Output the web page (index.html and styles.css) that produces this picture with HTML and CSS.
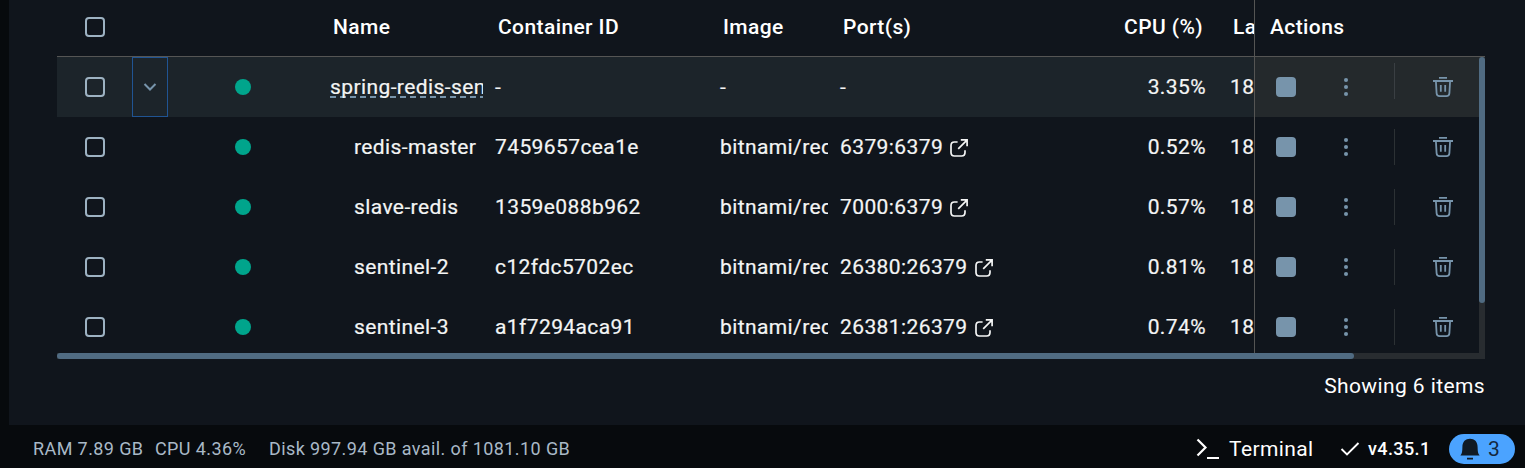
FILE: index.html
```html
<!DOCTYPE html>
<html lang="en">
<head>
<meta charset="utf-8">
<title>Containers</title>
<link rel="stylesheet" href="styles.css">
</head>
<body>
<svg class="defs" aria-hidden="true">
  <symbol id="open" viewBox="0 0 20 20"><path d="M8.6 4H5.400Q2 4 2 7.400v7.200Q2 18 5.400 18h7.200Q16 18 16 14.600V12.200M11.800 1.900h6.300v6.300M17.700 2.300 9.200 10.800" fill="none" stroke="currentColor" stroke-width="1.700"/></symbol>
  <symbol id="trash" viewBox="0 0 20 20"><path d="M6 .9h8M0 4h20M2.900 4l.7 12.200Q3.800 19.100 6.600 19.100h6.800Q16.200 19.100 16.400 16.200L17.100 4M7.800 8v6.800M12.200 8v6.800" fill="none" stroke="currentColor" stroke-width="1.800"/></symbol>
  <symbol id="dots" viewBox="0 0 6 20"><circle cx="3" cy="3" r="2.050"/><circle cx="3" cy="10" r="2.050"/><circle cx="3" cy="17" r="2.050"/></symbol>
</svg>
<main class="panel">
  <section class="table">
    <div class="head">
      <div class="cells">
        <div class="center"><span class="check"></span></div><div></div><div></div>
        <div class="cell">Name</div><div class="cell">Container ID</div><div class="cell">Image</div><div class="cell">Port(s)</div><div class="cell num">CPU (%)</div><div class="cell last">La</div>
      </div>
      <div class="actions-title">Actions</div>
    </div>
    <div class="viewport">
      <div class="rows">
        <div class="row selected">
          <div class="cells">
            <div class="center"><span class="check"></span></div>
            <div class="expand"><svg width="14" height="10" viewBox="0 0 14 10"><path d="M1.500 2 7 7.500l5.500-5.500" fill="none" stroke="currentColor" stroke-width="2"/></svg></div>
            <div class="center"><span class="status"></span></div>
            <div class="cell"><span class="link">spring-redis-sen</span></div><div class="cell">-</div><div class="cell">-</div><div class="cell">-</div><div class="cell num">3.35%</div><div class="cell last">18</div>
          </div>
          <div class="actions"><span class="stop"></span><svg class="dots"><use href="#dots"/></svg><i class="rule"></i><svg class="trash"><use href="#trash"/></svg></div>
        </div>
        <div class="row">
          <div class="cells">
            <div class="center"><span class="check"></span></div><div></div><div class="center"><span class="status"></span></div>
            <div class="cell child">redis-master</div><div class="cell">7459657cea1e</div><div class="cell">bitnami/red</div><div class="cell port">6379:6379<svg class="open"><use href="#open"/></svg></div><div class="cell num">0.52%</div><div class="cell last">18</div>
          </div>
          <div class="actions"><span class="stop"></span><svg class="dots"><use href="#dots"/></svg><i class="rule"></i><svg class="trash"><use href="#trash"/></svg></div>
        </div>
        <div class="row">
          <div class="cells">
            <div class="center"><span class="check"></span></div><div></div><div class="center"><span class="status"></span></div>
            <div class="cell child">slave-redis</div><div class="cell">1359e088b962</div><div class="cell">bitnami/red</div><div class="cell port">7000:6379<svg class="open"><use href="#open"/></svg></div><div class="cell num">0.57%</div><div class="cell last">18</div>
          </div>
          <div class="actions"><span class="stop"></span><svg class="dots"><use href="#dots"/></svg><i class="rule"></i><svg class="trash"><use href="#trash"/></svg></div>
        </div>
        <div class="row">
          <div class="cells">
            <div class="center"><span class="check"></span></div><div></div><div class="center"><span class="status"></span></div>
            <div class="cell child">sentinel-2</div><div class="cell">c12fdc5702ec</div><div class="cell">bitnami/red</div><div class="cell port">26380:26379<svg class="open"><use href="#open"/></svg></div><div class="cell num">0.81%</div><div class="cell last">18</div>
          </div>
          <div class="actions"><span class="stop"></span><svg class="dots"><use href="#dots"/></svg><i class="rule"></i><svg class="trash"><use href="#trash"/></svg></div>
        </div>
        <div class="row">
          <div class="cells">
            <div class="center"><span class="check"></span></div><div></div><div class="center"><span class="status"></span></div>
            <div class="cell child">sentinel-3</div><div class="cell">a1f7294aca91</div><div class="cell">bitnami/red</div><div class="cell port">26381:26379<svg class="open"><use href="#open"/></svg></div><div class="cell num">0.74%</div><div class="cell last">18</div>
          </div>
          <div class="actions"><span class="stop"></span><svg class="dots"><use href="#dots"/></svg><i class="rule"></i><svg class="trash"><use href="#trash"/></svg></div>
        </div>
      </div>
      <div class="vtrack"><div class="vthumb"></div></div>
    </div>
    <div class="htrack"><div class="hthumb"></div></div>
  </section>
  <div class="summary">Showing 6 items</div>
</main>
<footer class="footer">
  <div class="stats"><span class="ram">RAM 7.89 GB</span><span class="cpu">CPU 4.36%</span><span>Disk 997.94 GB avail. of 1081.10 GB</span></div>
  <div class="tools">
    <svg class="prompt" viewBox="0 0 24 22"><path d="M1.500 1.500l8 8-8 8M11 20h12" fill="none" stroke="#fff" stroke-width="2.200"/></svg>
    <span class="terminal">Terminal</span>
    <svg class="tick" viewBox="0 0 20 16"><path d="M1.500 8l5.500 5.500L18.500 2" fill="none" stroke="#fff" stroke-width="1.900"/></svg>
    <span class="version">v4.35.1</span>
    <div class="alerts"><svg class="bell" viewBox="0 0 20 22"><path d="M.4 17.500c1.700-1.800 1.900-4.200 2-8.500C2.500 3.500 5.500.7 10 .7s7.500 2.800 7.600 8.300c.1 4.300.3 6.700 2 8.500zM7 19.800h6v1.800H7z" fill="#101a24"/></svg><span>3</span></div>
  </div>
</footer>
</body>
</html>
```
FILE: styles.css
```css
* { box-sizing: border-box; }
body {
  margin: 0; height: 468px; overflow: hidden;
  display: flex; flex-direction: column;
  background: #070a0d; color: #fff;
  font: 21px/30px Roboto, sans-serif; letter-spacing: .4px;
}
svg { display: block; flex: none; }
.defs { display: none; }
.panel { flex: none; height: 425px; margin-left: 9px; padding: 0 40px 0 48px; background: #10151c; }
.table { width: 1428px; }
.head { display: flex; height: 57px; border-bottom: 1px solid #555554; font-weight: 500; }
.cells {
  width: 1197px; overflow: hidden; display: grid; align-items: center;
  grid-template-columns: 75px 36px 150px 165px 225px 120px 240px 150px 36px;
}
.cell { padding-left: 12px; overflow: hidden; white-space: nowrap; }
.head .cell { padding-left: 15px; margin-top: -2px; }
.head .num { padding-right: 15px; }
.num { text-align: right; padding-right: 12px; }
.head .actions-title { border-left: 1px solid #555554; width: 231px; padding: 12px 0 0 15px; }
.viewport { display: flex; height: 296px; overflow: hidden; }
.rows { width: 1422px; height: 300px; color: #f4f5f5; -webkit-text-stroke: .2px #f4f5f5; }
.row { display: flex; height: 60px; }
.selected { background: #1c242a; }
.center { display: flex; justify-content: center; }
.check { width: 20px; height: 20px; border: 2px solid #9db2c2; border-radius: 4px; }
.head .check { margin-top: -2px; }
.expand { height: 60px; border: 1px solid #205493; display: flex; align-items: center; justify-content: center; color: #7794ab; }
.status { width: 16.5px; height: 16.5px; border-radius: 50%; background: #00a58c; }
.link {
  display: block; height: 30px;
  background: repeating-linear-gradient(90deg, #7794ab 0 6px, transparent 6px 10px) 0 24px / 100% 2px no-repeat;
}
.child { padding-left: 36px; }
.port { display: flex; align-items: center; }
.open { width: 20px; height: 20px; margin: 2px 0 0 6px; }
.actions { width: 225px; border-left: 1px solid #555554; display: flex; align-items: center; padding-left: 21px; color: #7794ab; }
.selected .actions { background: #24292c; }
.stop { width: 20px; height: 20px; background: #7794ab; border-radius: 4px; }
.dots { width: 6px; height: 20px; margin-left: 47px; fill: currentColor; }
.rule { width: 1px; height: 36px; margin-left: 45px; background: #2c3134; }
.selected .rule { margin-top: -12px; background: #3a3f43; }
.trash { width: 20px; height: 20px; margin-left: 38px; }
.vtrack { width: 6px; background: #282c30; }
.vthumb { height: 246px; border-radius: 3px; background: #506b82; }
.htrack { height: 6px; background: #282c30; }
.hthumb { width: 1297px; height: 6px; border-radius: 3px; background: #506b82; }
.summary { text-align: right; padding-top: 12px; }
.footer { height: 43px; display: flex; justify-content: space-between; padding: 4px 10px 0 33px; }
.stats { display: flex; align-items: center; font-size: 18px; color: #a9b9c7; white-space: nowrap; }
.ram { width: 122px; }
.cpu { width: 114px; }
.tools { display: flex; align-items: center; }
.prompt { width: 24px; height: 22px; margin-right: 9px; }
.terminal { width: 111px; }
.tick { width: 20px; height: 16px; }
.version { width: 81px; margin-left: 8px; font-size: 18px; font-weight: 500; }
.alerts { width: 66px; height: 30px; border-radius: 15px; background: #4ba3ff; color: #14283d; display: flex; align-items: center; padding-left: 11px; gap: 8px; }
.bell { width: 20px; height: 22px; }
```
